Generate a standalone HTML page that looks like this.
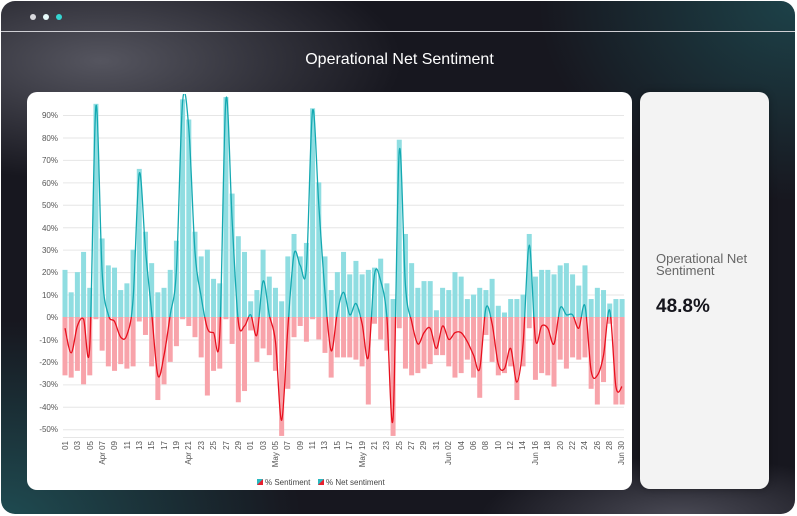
<!DOCTYPE html>
<html><head><meta charset="utf-8"><style>
html,body{margin:0;padding:0;background:#fff;width:797px;height:516px;overflow:hidden;font-family:"Liberation Sans",sans-serif}
.frame{position:absolute;left:1px;top:1px;width:794px;height:513px;border-radius:14px;overflow:hidden;
background:radial-gradient(ellipse 300px 200px at 0px 520px,#1f4c52 0%,rgba(31,76,82,0) 100%),radial-gradient(ellipse 260px 200px at 797px 0px,#1d4249 0%,rgba(29,66,73,0) 100%),radial-gradient(ellipse 300px 120px at 100px 60px,#55555f 0%,rgba(85,85,95,0) 100%),radial-gradient(ellipse 200px 60px at 680px 516px,#4a4a55 0%,rgba(74,74,85,0) 100%),#17171f}
.dot{position:absolute;top:13px;width:6px;height:6px;border-radius:50%}
.line{position:absolute;left:0;right:0;top:30px;height:1px;background:#cfcfd4}
.title{position:absolute;left:0;width:797px;top:50px;text-align:center;color:#fff;font-size:16px}
.card{position:absolute;left:27px;top:92px;width:605px;height:398px;background:#fff;border-radius:10px}
.side{position:absolute;left:640px;top:92px;width:129px;height:397px;background:#f3f3f3;border-radius:10px;box-shadow:0 0 8px rgba(0,0,0,.3)}
.side .l{position:absolute;left:16px;top:161px;font-size:13px;color:#666;line-height:12px}
.side .v{position:absolute;left:16px;top:204px;font-size:19px;font-weight:bold;color:#15151c}
</style></head><body>
<div class="frame">
<div class="dot" style="left:29px;background:#d9d9dd"></div>
<div class="dot" style="left:42px;background:#e8fbfb"></div>
<div class="dot" style="left:55px;background:#35d6d2"></div>
<div class="line"></div>
<div class="title">Operational Net Sentiment</div>
</div>
<div class="card"></div>
<div class="side"><div class="l">Operational Net<br>Sentiment</div><div class="v">48.8%</div></div>
<svg id="ch" width="797" height="516" style="position:absolute;left:0;top:0" font-family="Liberation Sans, sans-serif">
<g id="grid" stroke="#e6e6e6" stroke-width="1"></g>
<g font-size="8" fill="#555" text-anchor="end">
<text x="58" y="118">90%</text><text x="58" y="141">80%</text><text x="58" y="163">70%</text><text x="58" y="186">60%</text><text x="58" y="208">50%</text><text x="58" y="231">40%</text><text x="58" y="253">30%</text><text x="58" y="275">20%</text><text x="58" y="298">10%</text><text x="58" y="320">0%</text><text x="58" y="343">-10%</text><text x="58" y="365">-20%</text><text x="58" y="387">-30%</text><text x="58" y="410">-40%</text><text x="58" y="432">-50%</text>
</g>
<g id="bars"></g>
<g font-size="8" fill="#444">
<rect x="257" y="479" width="6" height="6" fill="#e8202f"/><polygon points="257,479 263,479 257,485" fill="#2bb9c0"/><text x="265" y="485">% Sentiment</text>
<rect x="318" y="479" width="6" height="6" fill="#e8202f"/><polygon points="318,479 324,479 318,485" fill="#2bb9c0"/><text x="326" y="485">% Net sentiment</text>
</g>
</svg>
<script>
var P=[21,11,20,29,13,95,35,23,22,12,15,30,66,38,24,11,13,21,34,97,88,38,27,30,17,15,98,55,36,29,7,12,30,18,13,7,27,37,27,33,93,60,27,12,20,29,19,25,19,21,22,26,15,8,79,37,24,13,16,16,3,13,12,20,18,8,10,13,12,17,5,2,8,8,10,37,18,21,21,19,23,24,19,14,23,8,13,12,6,8,8];
var N=[-26,-27,-24,-30,-26,-1,-15,-22,-24,-21,-23,-22,-2,-8,-22,-37,-30,-20,-13,-1,-4,-9,-18,-35,-24,-23,-1,-12,-38,-33,-6,-20,-14,-17,-24,-53,-32,-9,-4,-11,-1,-10,-16,-27,-18,-18,-18,-19,-22,-39,-3,-10,-15,-53,-5,-23,-26,-25,-23,-21,-17,-17,-22,-27,-25,-19,-27,-36,-8,-20,-26,-25,-22,-37,-22,-5,-28,-25,-26,-31,-19,-23,-18,-19,-18,-32,-39,-29,-3,-39,-39];
var ns="http://www.w3.org/2000/svg";
function el(t,a,p){var e=document.createElementNS(ns,t);for(var k in a)e.setAttribute(k,a[k]);p.appendChild(e);return e;}
var Z=317,S=2.244;function Y(v){return Z-v*S;}function X(i){return 65+6.19*i;}
var g=document.getElementById('grid');
for(var v=90;v>=-50;v-=10)el('line',{x1:63,x2:624,y1:Y(v)+.5,y2:Y(v)+.5},g);
el('line',{x1:63,x2:624,y1:437.5,y2:437.5},g);
var b=document.getElementById('bars');
for(var i=0;i<P.length;i++){
el('rect',{x:X(i)-2.5,y:Y(P[i]),width:5,height:P[i]*S,fill:'#8fdde1'},b);
el('rect',{x:X(i)-2.5,y:Z,width:5,height:-N[i]*S,fill:'#f8a3aa'},b);}
var pts=[];for(var i=0;i<P.length;i++)pts.push([X(i),Y(P[i]+N[i])]);
var d='M'+pts[0][0]+','+pts[0][1];
for(var i=0;i<pts.length-1;i++){var p0=pts[Math.max(0,i-1)],p1=pts[i],p2=pts[i+1],p3=pts[Math.min(pts.length-1,i+2)];
d+=' C'+(p1[0]+(p2[0]-p0[0])/6)+','+(p1[1]+(p2[1]-p0[1])/6)+' '+(p2[0]-(p3[0]-p1[0])/6)+','+(p2[1]-(p3[1]-p1[1])/6)+' '+p2[0]+','+p2[1];}
var defs=el('defs',{},b);var c1=el('clipPath',{id:'up'},defs);el('rect',{x:0,y:94,width:797,height:Z-94},c1);
var c2=el('clipPath',{id:'dn'},defs);el('rect',{x:0,y:Z,width:797,height:200},c2);
el('path',{d:d,fill:'none',stroke:'#14a9b1','stroke-width':1.3,'clip-path':'url(#up)'},b);
el('path',{d:d,fill:'none',stroke:'#e8101e','stroke-width':1.3,'clip-path':'url(#dn)'},b);
</script>
<svg width="797" height="516" style="position:absolute;left:0;top:0" font-family="Liberation Sans, sans-serif" font-size="8" fill="#555" text-anchor="end">
<text transform="translate(68,441) rotate(-90)">01</text>
<text transform="translate(80,441) rotate(-90)">03</text>
<text transform="translate(93,441) rotate(-90)">05</text>
<text transform="translate(105,441) rotate(-90)">Apr 07</text>
<text transform="translate(117,441) rotate(-90)">09</text>
<text transform="translate(130,441) rotate(-90)">11</text>
<text transform="translate(142,441) rotate(-90)">13</text>
<text transform="translate(154,441) rotate(-90)">15</text>
<text transform="translate(167,441) rotate(-90)">17</text>
<text transform="translate(179,441) rotate(-90)">19</text>
<text transform="translate(191,441) rotate(-90)">Apr 21</text>
<text transform="translate(204,441) rotate(-90)">23</text>
<text transform="translate(216,441) rotate(-90)">25</text>
<text transform="translate(229,441) rotate(-90)">27</text>
<text transform="translate(241,441) rotate(-90)">29</text>
<text transform="translate(253,441) rotate(-90)">01</text>
<text transform="translate(266,441) rotate(-90)">03</text>
<text transform="translate(278,441) rotate(-90)">May 05</text>
<text transform="translate(290,441) rotate(-90)">07</text>
<text transform="translate(303,441) rotate(-90)">09</text>
<text transform="translate(315,441) rotate(-90)">11</text>
<text transform="translate(327,441) rotate(-90)">13</text>
<text transform="translate(340,441) rotate(-90)">15</text>
<text transform="translate(352,441) rotate(-90)">17</text>
<text transform="translate(365,441) rotate(-90)">May 19</text>
<text transform="translate(377,441) rotate(-90)">21</text>
<text transform="translate(389,441) rotate(-90)">23</text>
<text transform="translate(402,441) rotate(-90)">25</text>
<text transform="translate(414,441) rotate(-90)">27</text>
<text transform="translate(426,441) rotate(-90)">29</text>
<text transform="translate(439,441) rotate(-90)">31</text>
<text transform="translate(451,441) rotate(-90)">Jun 02</text>
<text transform="translate(464,441) rotate(-90)">04</text>
<text transform="translate(476,441) rotate(-90)">06</text>
<text transform="translate(488,441) rotate(-90)">08</text>
<text transform="translate(501,441) rotate(-90)">10</text>
<text transform="translate(513,441) rotate(-90)">12</text>
<text transform="translate(525,441) rotate(-90)">14</text>
<text transform="translate(538,441) rotate(-90)">Jun 16</text>
<text transform="translate(550,441) rotate(-90)">18</text>
<text transform="translate(563,441) rotate(-90)">20</text>
<text transform="translate(575,441) rotate(-90)">22</text>
<text transform="translate(587,441) rotate(-90)">24</text>
<text transform="translate(600,441) rotate(-90)">26</text>
<text transform="translate(612,441) rotate(-90)">28</text>
<text transform="translate(624,441) rotate(-90)">Jun 30</text>
</svg>
</body></html>
